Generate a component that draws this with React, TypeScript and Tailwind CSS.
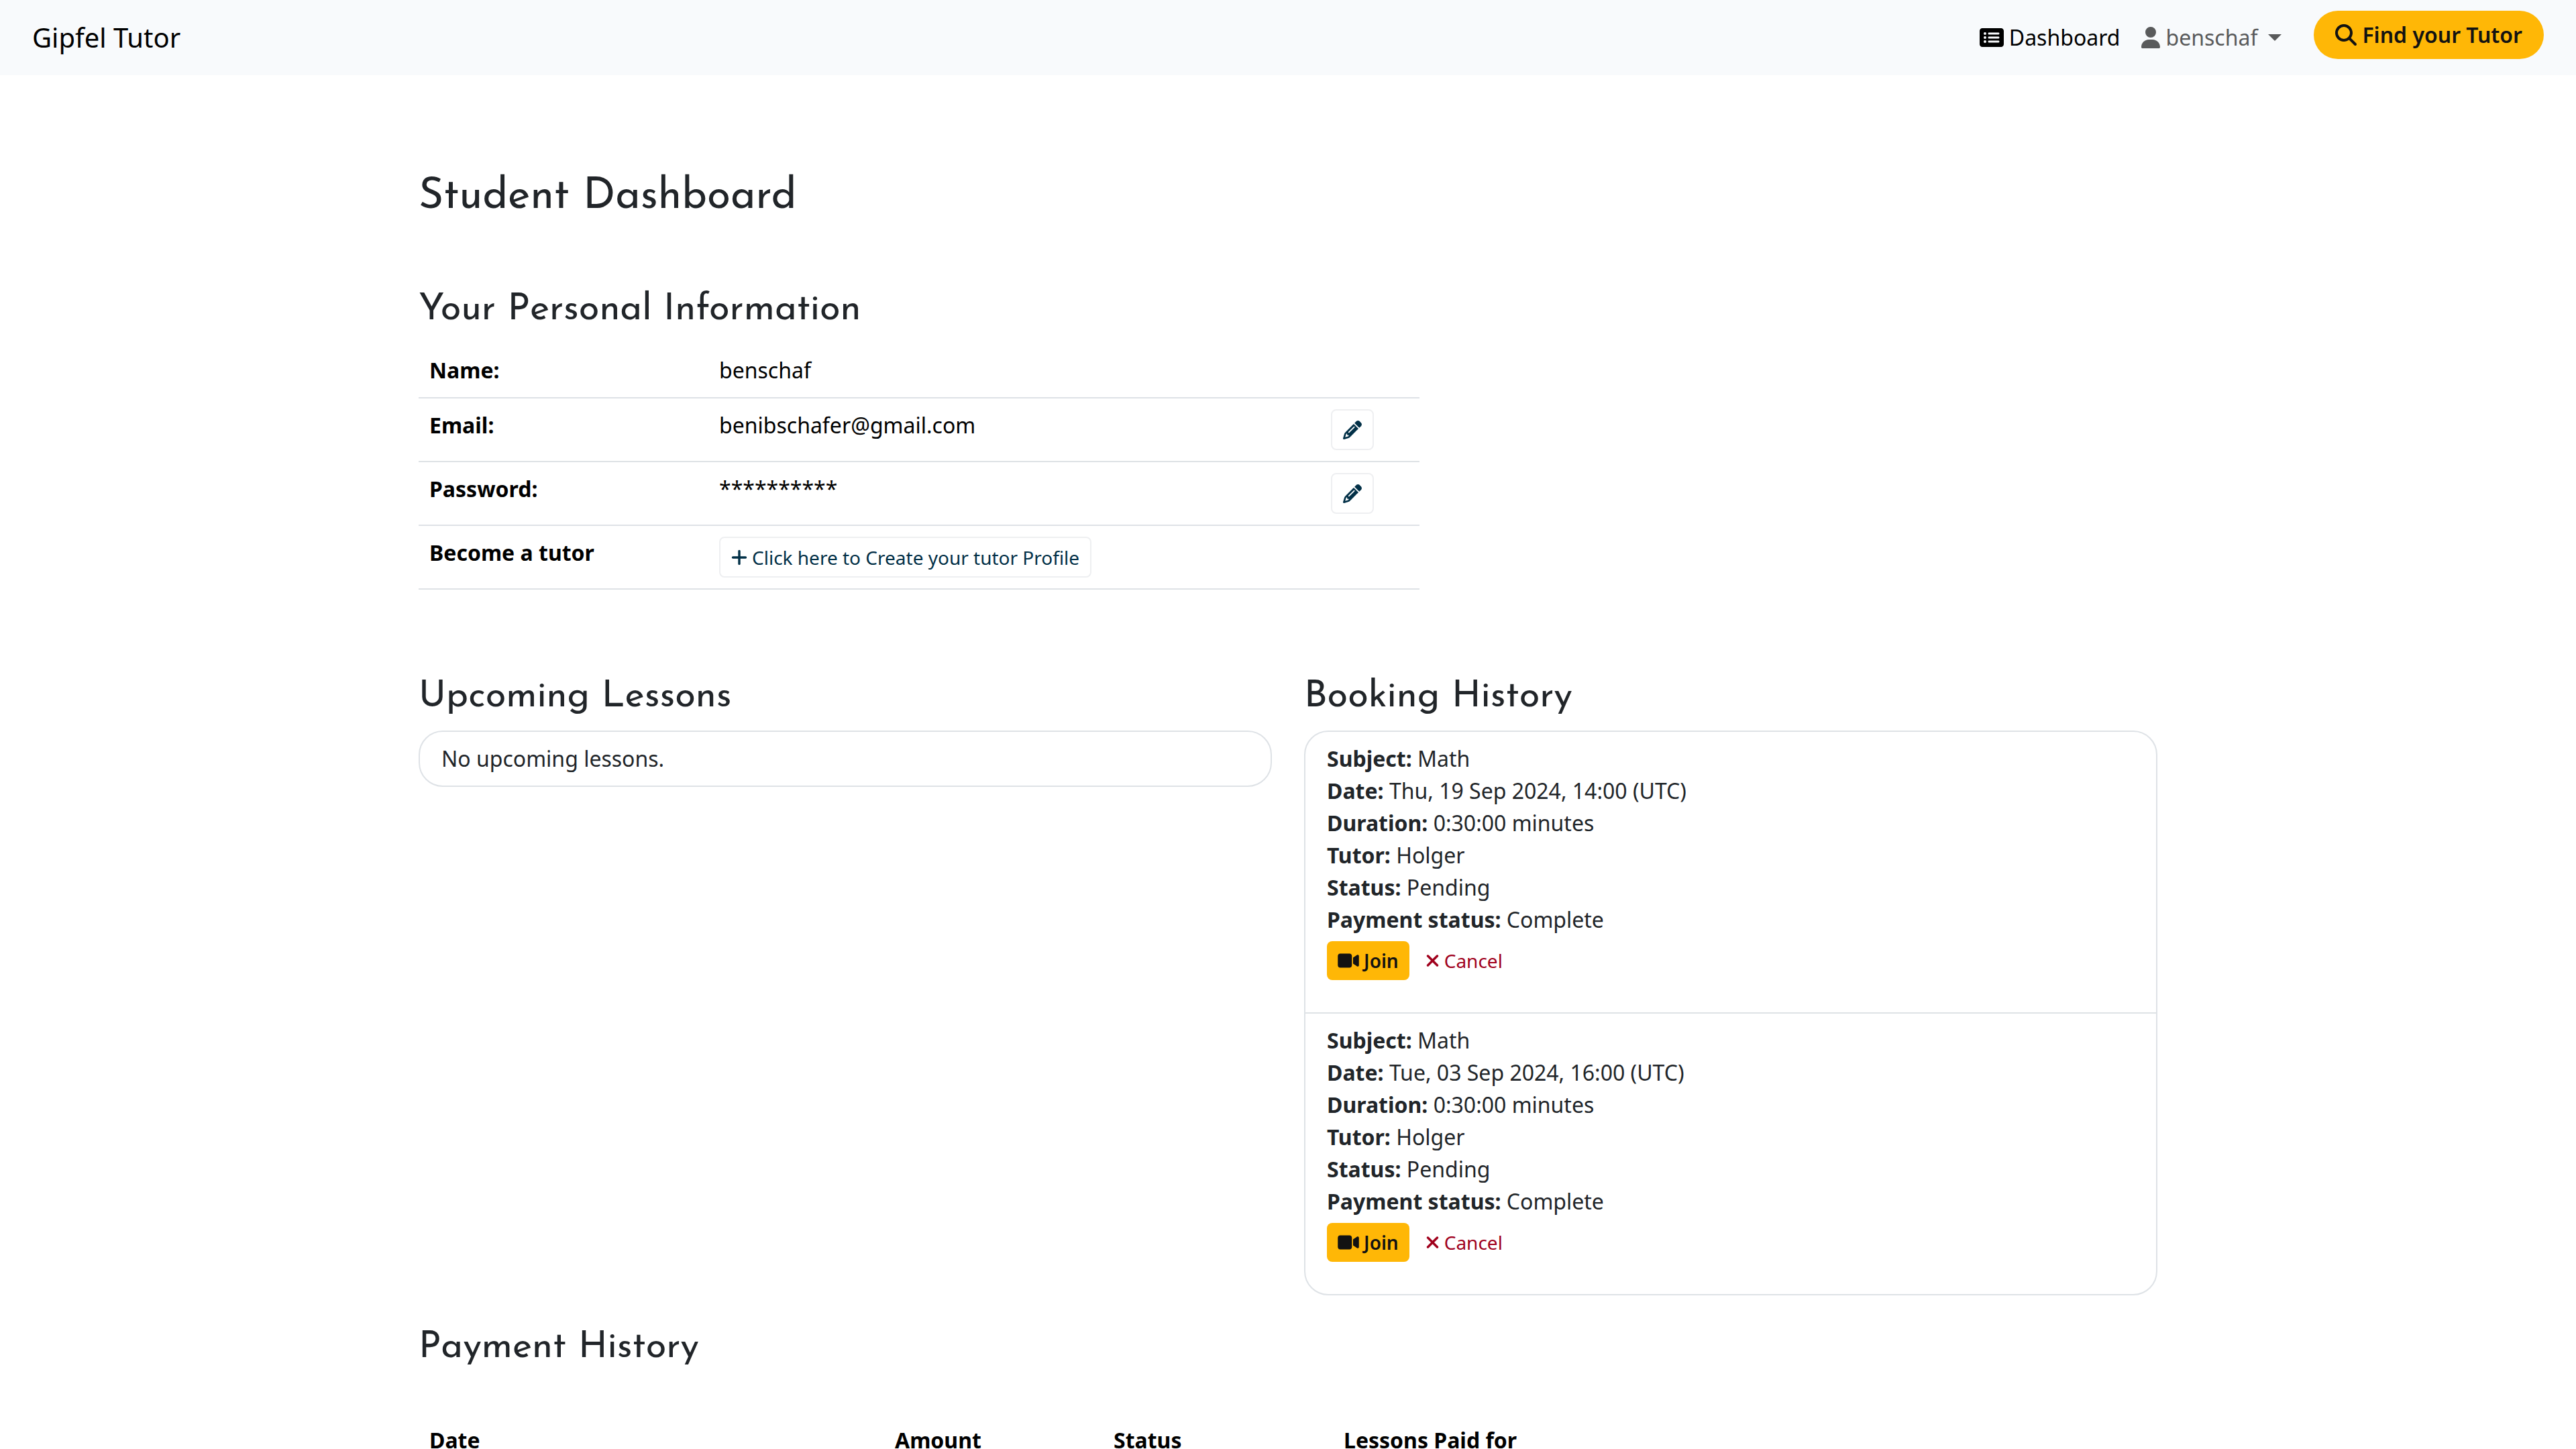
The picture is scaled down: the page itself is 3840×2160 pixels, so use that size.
import type { ReactNode } from "react";
import {
  FaMagnifyingGlass,
  FaPencil,
  FaPlus,
  FaRectangleList,
  FaUser,
  FaVideo,
  FaXmark,
} from "react-icons/fa6";

type Booking = {
  subject: string;
  date: string;
  duration: string;
  tutor: string;
  status: string;
  payment: string;
};

const bookings: Booking[] = [
  {
    subject: "Math",
    date: "Thu, 19 Sep 2024, 14:00 (UTC)",
    duration: "0:30:00 minutes",
    tutor: "Holger",
    status: "Pending",
    payment: "Complete",
  },
  {
    subject: "Math",
    date: "Tue, 03 Sep 2024, 16:00 (UTC)",
    duration: "0:30:00 minutes",
    tutor: "Holger",
    status: "Pending",
    payment: "Complete",
  },
];

function Navbar() {
  return (
    <nav className="flex items-start justify-between bg-[#f8fafc] px-12 py-4 text-black">
      <a href="#" className="py-[10px] text-[40px] leading-[60px]">
        Gipfel Tutor
      </a>
      <div className="flex items-start">
        <a href="#" className="flex items-center gap-2 px-4 py-4">
          <FaRectangleList className="h-8 w-9" />
          Dashboard
        </a>
        <button type="button" className="mr-8 flex items-center gap-2 px-4 py-4 text-[#595a5b]">
          <FaUser className="h-8 w-7" />
          benschaf
          <span className="ml-2 border-x-10 border-t-10 border-x-transparent border-t-[#595a5b]" />
        </button>
        <a
          href="#"
          className="flex items-center gap-2 rounded-full bg-[#ffb706] px-8 py-3 font-semibold text-[#121212]"
        >
          <FaMagnifyingGlass className="size-8" />
          Find your Tutor
        </a>
      </div>
    </nav>
  );
}

function SectionTitle({ children }: { children: ReactNode }) {
  return (
    <h2 className="font-['Josefin_Sans','Lato',sans-serif] text-[56px] leading-[68px]">{children}</h2>
  );
}

function InfoRow({ label, value, action }: { label: string; value: ReactNode; action?: ReactNode }) {
  return (
    <tr className="border-b-2 border-[#dee2e6] align-top">
      <th scope="row" className="px-4 py-4 text-left font-bold">
        {label}
      </th>
      <td className="px-4 py-4">{value}</td>
      <td className="px-4 py-4">{action}</td>
    </tr>
  );
}

function EditButton({ label }: { label: string }) {
  return (
    <button
      type="button"
      aria-label={label}
      className="flex h-[61px] w-16 items-center justify-center rounded-lg border-2 border-[#eeeff1] text-[#023047]"
    >
      <FaPencil className="size-7" />
    </button>
  );
}

function Field({ label, value }: { label: string; value: string }) {
  return (
    <p>
      <strong>{label}:</strong> {value}
    </p>
  );
}

function BookingItem({ booking }: { booking: Booking }) {
  return (
    <li className="px-8 pt-4 pb-12">
      <Field label="Subject" value={booking.subject} />
      <Field label="Date" value={booking.date} />
      <Field label="Duration" value={booking.duration} />
      <Field label="Tutor" value={booking.tutor} />
      <Field label="Status" value={booking.status} />
      <Field label="Payment status" value={booking.payment} />
      <div className="mt-2 flex gap-2 text-[28px] leading-[42px]">
        <button
          type="button"
          className="flex items-center gap-[7px] rounded-lg bg-[#ffb706] px-4 py-2 font-semibold text-[#121212]"
        >
          <FaVideo className="h-7 w-8" />
          Join
        </button>
        <button type="button" className="flex items-center gap-[7px] px-4 py-2 text-[#a0001c]">
          <FaXmark className="size-7 w-[21px]" />
          Cancel
        </button>
      </div>
    </li>
  );
}

export default function App() {
  return (
    <div className="min-h-screen bg-white font-['Noto_Sans',sans-serif] text-[32px] leading-[48px] text-[#212529]">
      <Navbar />
      <main className="mx-auto max-w-[2640px] px-6 pt-36">
        <h1 className="font-['Josefin_Sans','Lato',sans-serif] text-[64px] leading-[76px]">
          Student Dashboard
        </h1>

        <section className="mt-24 grid grid-cols-12 gap-x-12">
          <div className="col-span-7">
            <SectionTitle>Your Personal Information</SectionTitle>
            <table className="mt-4 w-full table-fixed border-collapse text-black">
              <colgroup>
                <col className="w-[432px]" />
                <col />
                <col className="w-[148px]" />
              </colgroup>
              <tbody>
                <InfoRow label="Name:" value="benschaf" />
                <InfoRow
                  label="Email:"
                  value="benibschafer@gmail.com"
                  action={<EditButton label="Edit email" />}
                />
                <InfoRow
                  label="Password:"
                  value="**********"
                  action={<EditButton label="Edit password" />}
                />
                <InfoRow
                  label="Become a tutor"
                  value={
                    <a
                      href="#"
                      className="flex h-[61px] w-fit items-center gap-[7px] rounded-lg border-2 border-[#eeeff1] px-4 text-[28px] leading-[42px] text-[#023047]"
                    >
                      <FaPlus className="h-7 w-6" />
                      Click here to Create your tutor Profile
                    </a>
                  }
                />
              </tbody>
            </table>
          </div>
        </section>

        <section className="mt-[126px] grid grid-cols-2 items-start gap-x-12">
          <div>
            <SectionTitle>Upcoming Lessons</SectionTitle>
            <ul className="mt-4 rounded-[36px] border-2 border-[#dee2e6]">
              <li className="px-8 py-4">No upcoming lessons.</li>
            </ul>
          </div>
          <div>
            <SectionTitle>Booking History</SectionTitle>
            <ul className="mt-4 divide-y-2 divide-[#dee2e6] rounded-[36px] border-2 border-[#dee2e6]">
              {bookings.map((booking) => (
                <BookingItem key={booking.date} booking={booking} />
              ))}
            </ul>
          </div>
        </section>

        <section className="mt-11">
          <SectionTitle>Payment History</SectionTitle>
          <table className="mt-16 w-full table-fixed border-collapse text-left text-black">
            <colgroup>
              <col className="w-[694px]" />
              <col className="w-[326px]" />
              <col className="w-[343px]" />
              <col />
            </colgroup>
            <thead>
              <tr>
                <th className="px-4 py-4">Date</th>
                <th className="px-4 py-4">Amount</th>
                <th className="px-4 py-4">Status</th>
                <th className="px-4 py-4">Lessons Paid for</th>
              </tr>
            </thead>
          </table>
        </section>
      </main>
    </div>
  );
}
